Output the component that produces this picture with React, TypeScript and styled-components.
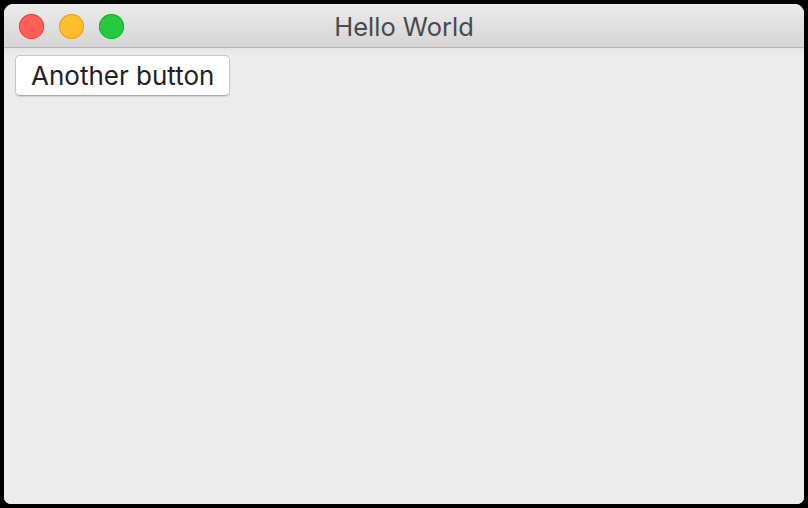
import React from "react";
import styled, { createGlobalStyle } from "styled-components";

const GlobalStyle = createGlobalStyle`
  html, body {
    margin: 0;
    padding: 0;
    background: #000;
  }
  body {
    font-family: Inter, "Liberation Sans", sans-serif;
  }
`;

const Screen = styled.div`
  width: 808px;
  height: 508px;
  padding: 4px;
  box-sizing: border-box;
  background: #000;
`;

const Window = styled.div`
  width: 800px;
  height: 500px;
  border-radius: 9px 9px 7px 7px;
  overflow: hidden;
  background: #ececec;
  display: flex;
  flex-direction: column;
`;

const TitleBar = styled.div`
  height: 44px;
  flex-shrink: 0;
  display: flex;
  align-items: center;
  position: relative;
  background: linear-gradient(#ebebeb, #d5d5d5);
  border-bottom: 1px solid #b3b3b3;
  box-sizing: border-box;
  padding-left: 15px;
`;

const Lights = styled.div`
  display: flex;
  gap: 15px;
  margin-top: 1px;
`;

const Light = styled.span<{ $fill: string; $edge: string }>`
  width: 25px;
  height: 25px;
  border-radius: 50%;
  background: ${(p) => p.$fill};
  box-shadow: inset 0 0 0 1px ${(p) => p.$edge};
`;

const Title = styled.div`
  position: absolute;
  left: 0;
  right: 0;
  top: 1px;
  bottom: 0;
  display: flex;
  align-items: center;
  justify-content: center;
  font-size: 25.5px;
  color: #4a4a4a;
  pointer-events: none;
`;

const Content = styled.div`
  flex: 1;
  padding: 7px 11px;
  background: linear-gradient(#e6e6e6, #ececec 6px);
`;

const Button = styled.button`
  font-family: Inter, "Liberation Sans", sans-serif;
  font-size: 26px;
  color: #222;
  background: #fff;
  border: 1px solid #c6c6c6;
  border-bottom-color: #a8a8a8;
  border-radius: 5px;
  height: 41px;
  padding: 0 15px;
  box-shadow: 0 1px 1px rgba(0, 0, 0, 0.12);
  cursor: default;
`;

export default function App() {
  return (
    <Screen>
      <GlobalStyle />
      <Window>
        <TitleBar>
          <Lights>
            <Light $fill="#fe5f57" $edge="#e1443f" />
            <Light $fill="#febc2e" $edge="#e0a125" />
            <Light $fill="#28c840" $edge="#1eaa32" />
          </Lights>
          <Title>Hello World</Title>
        </TitleBar>
        <Content>
          <Button>Another button</Button>
        </Content>
      </Window>
    </Screen>
  );
}
